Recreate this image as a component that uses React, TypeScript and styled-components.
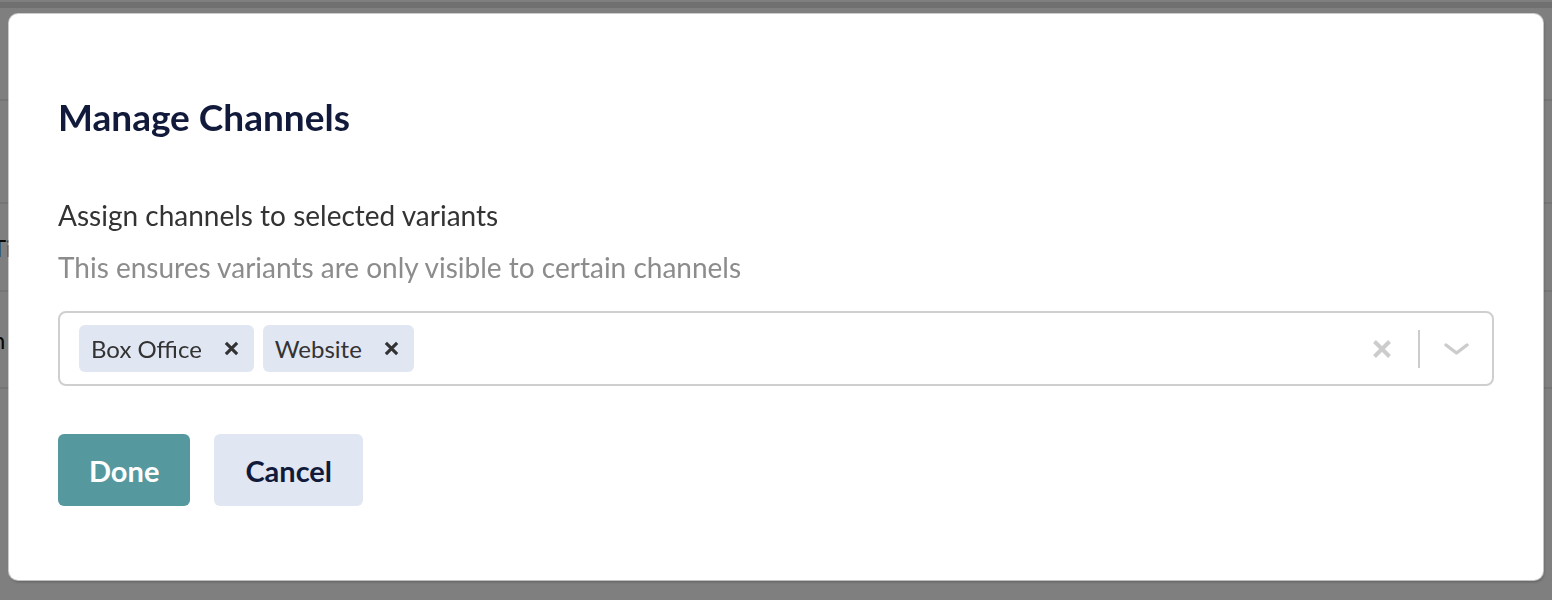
import React from "react";
import styled, { createGlobalStyle } from "styled-components";

const Global = createGlobalStyle`
  html, body { margin: 0; padding: 0; }
  body { font-family: Lato, "Noto Sans", sans-serif; background: #fff; }
  * { box-sizing: border-box; }
`;

const Page = styled.div`
  width: 1552px;
  height: 600px;
  overflow: hidden;
  display: flex;
  flex-direction: column;
  background: #fff;
`;

const PageHeader = styled.div`
  height: 8px;
  background: #fff;
  border-bottom: 6px solid #e0e0e0;
  flex: none;
`;

const PageRow = styled.div<{ $h: number }>`
  height: ${(p) => p.$h}px;
  flex: none;
  border-bottom: 2px solid #ebebeb;
  display: flex;
  align-items: center;
  font-size: 24px;
  color: #111;
`;

const RowText = styled.span`
  margin-left: -8px;
`;

const Overlay = styled.div`
  position: fixed;
  inset: 0;
  background: rgba(0, 0, 0, 0.5);
  padding: 14px 9px 20px 9px;
  display: flex;
`;

const Modal = styled.div`
  flex: 1;
  background: #fff;
  border-radius: 9px;
  box-shadow: 0 0 0 1px rgba(255, 255, 255, 0.6), 1px 2px 3px rgba(0, 0, 0, 0.25);
  padding: 81px 49px 0 49px;
  display: flex;
  flex-direction: column;
`;

const Title = styled.h2`
  margin: 0;
  font-family: Lato, sans-serif;
  font-weight: 700;
  font-size: 37px;
  line-height: 44px;
  color: #111a3b;
`;

const Label = styled.div`
  margin-top: 59px;
  font-size: 28px;
  line-height: 34px;
  color: #333;
`;

const Hint = styled.div`
  margin-top: 18px;
  font-size: 28px;
  line-height: 34px;
  color: #8c8c8c;
`;

const SelectBox = styled.div`
  margin-top: 27px;
  height: 75px;
  border: 2px solid #cfcfcf;
  border-radius: 8px;
  display: flex;
  align-items: center;
  padding: 0 0 0 19px;
`;

const Values = styled.div`
  flex: 1;
  display: flex;
  gap: 9px;
  align-items: center;
`;

const Chip = styled.div`
  height: 47px;
  background: #e1e6f3;
  border-radius: 6px;
  display: flex;
  align-items: center;
  padding: 0 15px 0 12px;
  font-size: 24px;
  color: #333;
`;

const ChipRemove = styled.span`
  margin-left: 22px;
  display: flex;
  align-items: center;
`;

const Indicators = styled.div`
  display: flex;
  align-items: center;
  height: 100%;
`;

const IndicatorBtn = styled.div`
  width: 72px;
  display: flex;
  align-items: center;
  justify-content: center;
`;

const Separator = styled.div`
  width: 2px;
  height: 38px;
  background: #cccccc;
`;

const Actions = styled.div`
  margin-top: 48px;
  display: flex;
  gap: 24px;
`;

const Button = styled.button<{ $primary?: boolean }>`
  height: 72px;
  border: none;
  border-radius: 6px;
  font-family: Lato, sans-serif;
  font-weight: 700;
  font-size: 29px;
  padding: 0 31px;
  cursor: pointer;
  background: ${(p) => (p.$primary ? "#55999f" : "#e1e6f3")};
  color: ${(p) => (p.$primary ? "#fff" : "#111a3b")};
`;

const XIcon = ({ size, color, w }: { size: number; color: string; w: number }) => (
  <svg width={size} height={size} viewBox="0 0 20 20">
    <path d="M2.5 2.5 L17.5 17.5 M17.5 2.5 L2.5 17.5" stroke={color} strokeWidth={w} strokeLinecap="butt" />
  </svg>
);

const Chevron = () => (
  <svg width="25" height="14" viewBox="0 0 25 14">
    <path d="M2 3 L12.5 11 L23 3" stroke="#cccccc" strokeWidth="3.4" fill="none" strokeLinecap="round" strokeLinejoin="round" />
  </svg>
);

export default function App() {
  return (
    <>
      <Global />
      <Page>
        <PageHeader />
        <PageRow $h={93} />
        <PageRow $h={103} />
        <PageRow $h={88}>
          <RowText>Ti</RowText>
        </PageRow>
        <PageRow $h={97}>
          <RowText>n</RowText>
        </PageRow>
      </Page>
      <Overlay>
        <Modal>
          <Title>Manage Channels</Title>
          <Label>Assign channels to selected variants</Label>
          <Hint>This ensures variants are only visible to certain channels</Hint>
          <SelectBox>
            <Values>
              <Chip>
                Box Office
                <ChipRemove>
                  <XIcon size={15} color="#333" w={4.2} />
                </ChipRemove>
              </Chip>
              <Chip>
                Website
                <ChipRemove>
                  <XIcon size={15} color="#333" w={4.2} />
                </ChipRemove>
              </Chip>
            </Values>
            <Indicators>
              <IndicatorBtn>
                <XIcon size={20} color="#cccccc" w={4} />
              </IndicatorBtn>
              <Separator />
              <IndicatorBtn>
                <Chevron />
              </IndicatorBtn>
            </Indicators>
          </SelectBox>
          <Actions>
            <Button $primary>Done</Button>
            <Button>Cancel</Button>
          </Actions>
        </Modal>
      </Overlay>
    </>
  );
}
